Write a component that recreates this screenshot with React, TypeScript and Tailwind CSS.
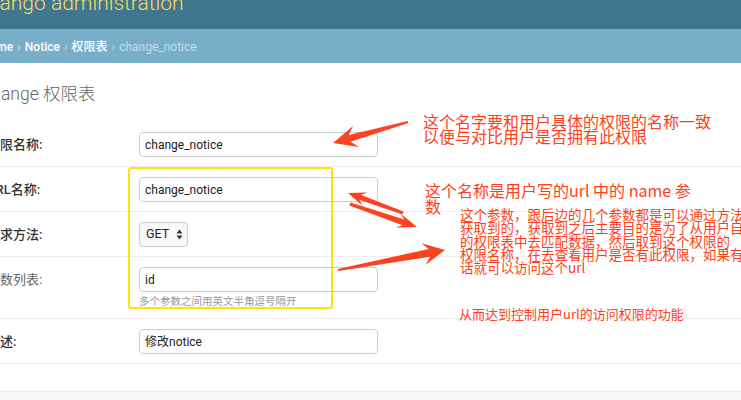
import React from 'react';

// Preview-style annotation arrow: thin tail, widening shaft, swept head
function arrow(x1: number, y1: number, x2: number, y2: number, head = 22, headW = 18, tailW = 2, neckW = 6) {
  const dx = x2 - x1;
  const dy = y2 - y1;
  const len = Math.hypot(dx, dy);
  const ux = dx / len;
  const uy = dy / len;
  const px = -uy;
  const py = ux;
  const nx = x2 - ux * head * 0.72;
  const ny = y2 - uy * head * 0.72;
  const bx = x2 - ux * head;
  const by = y2 - uy * head;
  const pts = [
    [x1 + (px * tailW) / 2, y1 + (py * tailW) / 2],
    [nx + (px * neckW) / 2, ny + (py * neckW) / 2],
    [bx + (px * headW) / 2, by + (py * headW) / 2],
    [x2, y2],
    [bx - (px * headW) / 2, by - (py * headW) / 2],
    [nx - (px * neckW) / 2, ny - (py * neckW) / 2],
    [x1 - (px * tailW) / 2, y1 - (py * tailW) / 2],
  ];
  return pts.map((p) => p[0].toFixed(1) + ',' + p[1].toFixed(1)).join(' ');
}

const djangoFont = { fontFamily: 'Roboto, "Noto Sans CJK SC", sans-serif' };
const noteFont = { fontFamily: '"Noto Sans CJK SC", "Noto Sans", sans-serif' };

function Row({ label, light, children }: { label: string; light?: boolean; children: React.ReactNode }) {
  return (
    <div className="flex items-start border-b border-[#eee] pt-[10px] pb-[9px]">
      <div
        className={
          'w-[152px] shrink-0 h-[25px] flex items-center text-[13px] whitespace-nowrap ' +
          (light ? 'text-[#666]' : 'text-[#333] font-medium')
        }
      >
        {label}
      </div>
      <div className="flex flex-col">{children}</div>
    </div>
  );
}

function TextInput({ value }: { value: string }) {
  return (
    <div className="w-[239px] h-[25px] border border-[#ccc] rounded-[4px] flex items-center px-[5px] text-[12px] text-[#222] bg-white">
      {value}
    </div>
  );
}

export default function App() {
  return (
    <div className="relative w-[741px] h-[400px] overflow-hidden bg-white" style={djangoFont}>
      {/* header */}
      <div className="h-[29px] bg-[#417690] overflow-hidden">
        <div className="-ml-[19px] -mt-[7px] text-[21px] font-light leading-[21px] text-[#f5dd5d] whitespace-nowrap">
          Django administration
        </div>
      </div>

      {/* breadcrumbs */}
      <div className="h-[34px] bg-[#79aec8] flex items-center text-[12px] text-white whitespace-nowrap pt-[1px]">
        <div className="-ml-[19px] flex items-center gap-[4px]">
          <span className="font-medium">Home</span>
          <span className="text-[#c4dce8]">›</span>
          <span className="font-medium">Notice</span>
          <span className="text-[#c4dce8]">›</span>
          <span className="font-medium">权限表</span>
          <span className="text-[#c4dce8]">›</span>
          <span className="text-[#c4dce8]">change_notice</span>
        </div>
      </div>

      {/* title */}
      <div className="-ml-[20px] mt-[20px] h-[22px] text-[17.5px] font-light leading-[22px] text-[#666] whitespace-nowrap">
        Change 权限表
      </div>

      {/* form */}
      <div className="-ml-[13px] mt-[17px]">
        <Row label="权限名称:">
          <TextInput value="change_notice" />
        </Row>
        <Row label="URL名称:">
          <TextInput value="change_notice" />
        </Row>
        <Row label="请求方法:">
          <div className="w-[49px] h-[25px] border border-[#ccc] rounded-[4px] bg-[#f8f8f8] flex items-center justify-between pl-[6px] pr-[4px] text-[12.5px] text-[#222]">
            <span>GET</span>
            <svg width="7" height="11" viewBox="0 0 7 11">
              <path d="M3.5 0.5 L6.5 4.5 L0.5 4.5 Z" fill="#333" />
              <path d="M3.5 10.5 L6.5 6.5 L0.5 6.5 Z" fill="#333" />
            </svg>
          </div>
        </Row>
        <Row label="参数列表:" light>
          <TextInput value="id" />
          <div className="mt-[3px] text-[10.5px] leading-[14px] text-[#999] whitespace-nowrap">
            多个参数之间用英文半角逗号隔开
          </div>
        </Row>
        <Row label="描述:">
          <TextInput value="修改notice" />
        </Row>
        <div className="mt-[27px] h-[20px] border-t border-[#eee] bg-[#f8f8f8]" />
      </div>

      {/* annotations */}
      <div className="absolute left-[128px] top-[167px] w-[205px] h-[142px] border-2 border-[#ffe40a] rounded-[3px]" />

      <svg className="absolute left-0 top-0 pointer-events-none" width="741" height="400">
        <polygon points={arrow(408, 122, 333, 143, 24, 22, 2, 7)} fill="#fb4322" />
        <polygon points={arrow(403, 213, 348, 193, 18, 14, 3, 5)} fill="#fb4322" />
        <polygon points={arrow(350, 204, 417, 227, 20, 15, 3, 6)} fill="#fb4322" />
        <polygon points={arrow(338, 270, 445, 250, 22, 22, 2, 8)} fill="#fb4322" />
      </svg>

      <div className="absolute left-[423px] top-[114px] text-[16px] leading-[15px] text-[#fd3f20] whitespace-nowrap" style={noteFont}>
        这个名字要和用户具体的权限的名称一致
        <br />
        以便与对比用户是否拥有此权限
      </div>
      <div className="absolute left-[425px] top-[182px] text-[16px] leading-[16px] text-[#fd3f20] whitespace-nowrap" style={noteFont}>
        这个名称是用户写的url 中的 name 参
        <br />
        数
      </div>
      <div className="absolute left-[460px] top-[208px] text-[13.5px] leading-[13.25px] text-[#fd3f20] whitespace-nowrap" style={noteFont}>
        这个参数，跟后边的几个参数都是可以通过方法
        <br />
        获取到的，获取到之后主要目的是为了从用户自
        <br />
        的权限表中去匹配数据，然后取到这个权限的
        <br />
        权限名称，在去查看用户是否有此权限，如果有
        <br />
        话就可以访问这个url
      </div>
      <div className="absolute left-[459px] top-[307px] text-[13px] leading-[14px] text-[#fd3f20] whitespace-nowrap" style={noteFont}>
        从而达到控制用户url的访问权限的功能
      </div>
    </div>
  );
}
